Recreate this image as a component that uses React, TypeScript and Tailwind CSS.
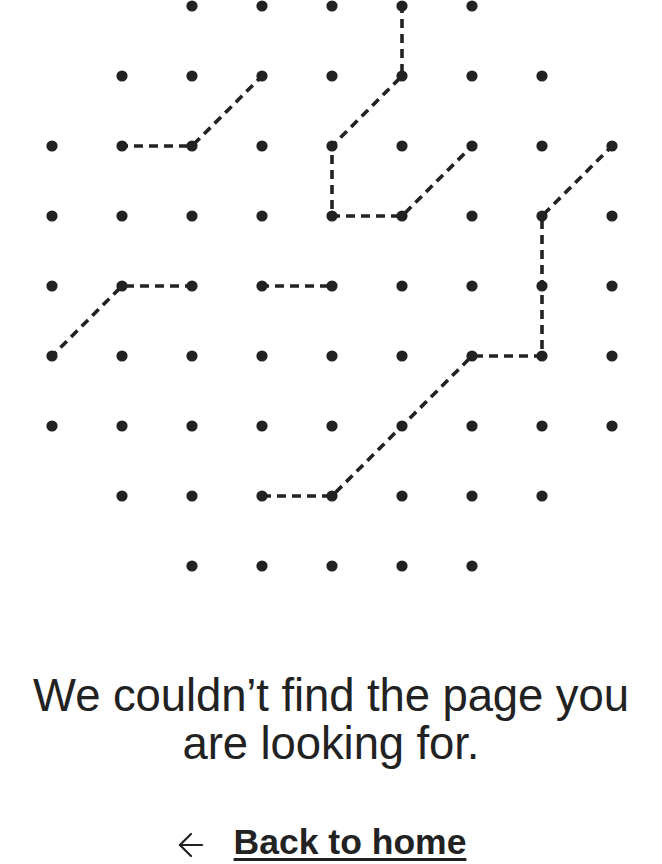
import { ArrowLeft } from "lucide-react";

// rows of the dot grid: [row, first column, last column]
const rows: [number, number, number][] = [
  [0, 2, 6],
  [1, 1, 7],
  [2, 0, 8],
  [3, 0, 8],
  [4, 0, 8],
  [5, 0, 8],
  [6, 0, 8],
  [7, 1, 7],
  [8, 2, 6],
];

// dashed paths, as lists of [col, row]
const paths: [number, number][][] = [
  [[5, 0], [5, 1], [4, 2], [4, 3], [5, 3], [6, 2]],
  [[3, 1], [2, 2], [1, 2]],
  [[8, 2], [7, 3], [7, 5], [6, 5], [4, 7], [3, 7]],
  [[2, 4], [1, 4], [0, 5]],
  [[3, 4], [4, 4]],
];

const px = (c: number) => 52 + c * 70;
const py = (r: number) => 6 + r * 70;

function DotGrid() {
  return (
    <svg width="662" height="580" viewBox="0 0 662 580" className="block">
      {paths.map((p, i) => (
        <polyline
          key={i}
          points={p.map(([c, r]) => `${px(c)},${py(r)}`).join(" ")}
          fill="none"
          stroke="#222"
          strokeWidth="3.6"
          strokeDasharray="9 6"
          strokeDashoffset="-13"
        />
      ))}
      {rows.flatMap(([r, a, b]) =>
        Array.from({ length: b - a + 1 }, (_, k) => (
          <circle key={`${r}-${k}`} cx={px(a + k)} cy={py(r)} r="5.6" fill="#222" />
        ))
      )}
    </svg>
  );
}

export default function App() {
  return (
    <div className="w-[662px] h-[864px] overflow-hidden bg-white text-[#222] font-['Liberation_Sans',Arial,sans-serif]">
      <DotGrid />
      <div className="flex flex-col items-center">
        <h1 className="mt-[92px] text-center text-[45.5px] leading-[48px] tracking-[-0.1px]">
          We couldn’t find the page you
          <br />
          are looking for.
        </h1>
        <a href="#" className="mt-[52px] mr-[24px] flex items-center gap-[24px]">
          <ArrowLeft className="mt-[6px] w-[38px] h-[38px]" strokeWidth={1.4} />
          <span className="text-[35.5px] leading-[42px] font-bold underline underline-offset-[4px] decoration-[2.5px]">
            Back to home
          </span>
        </a>
      </div>
    </div>
  );
}
